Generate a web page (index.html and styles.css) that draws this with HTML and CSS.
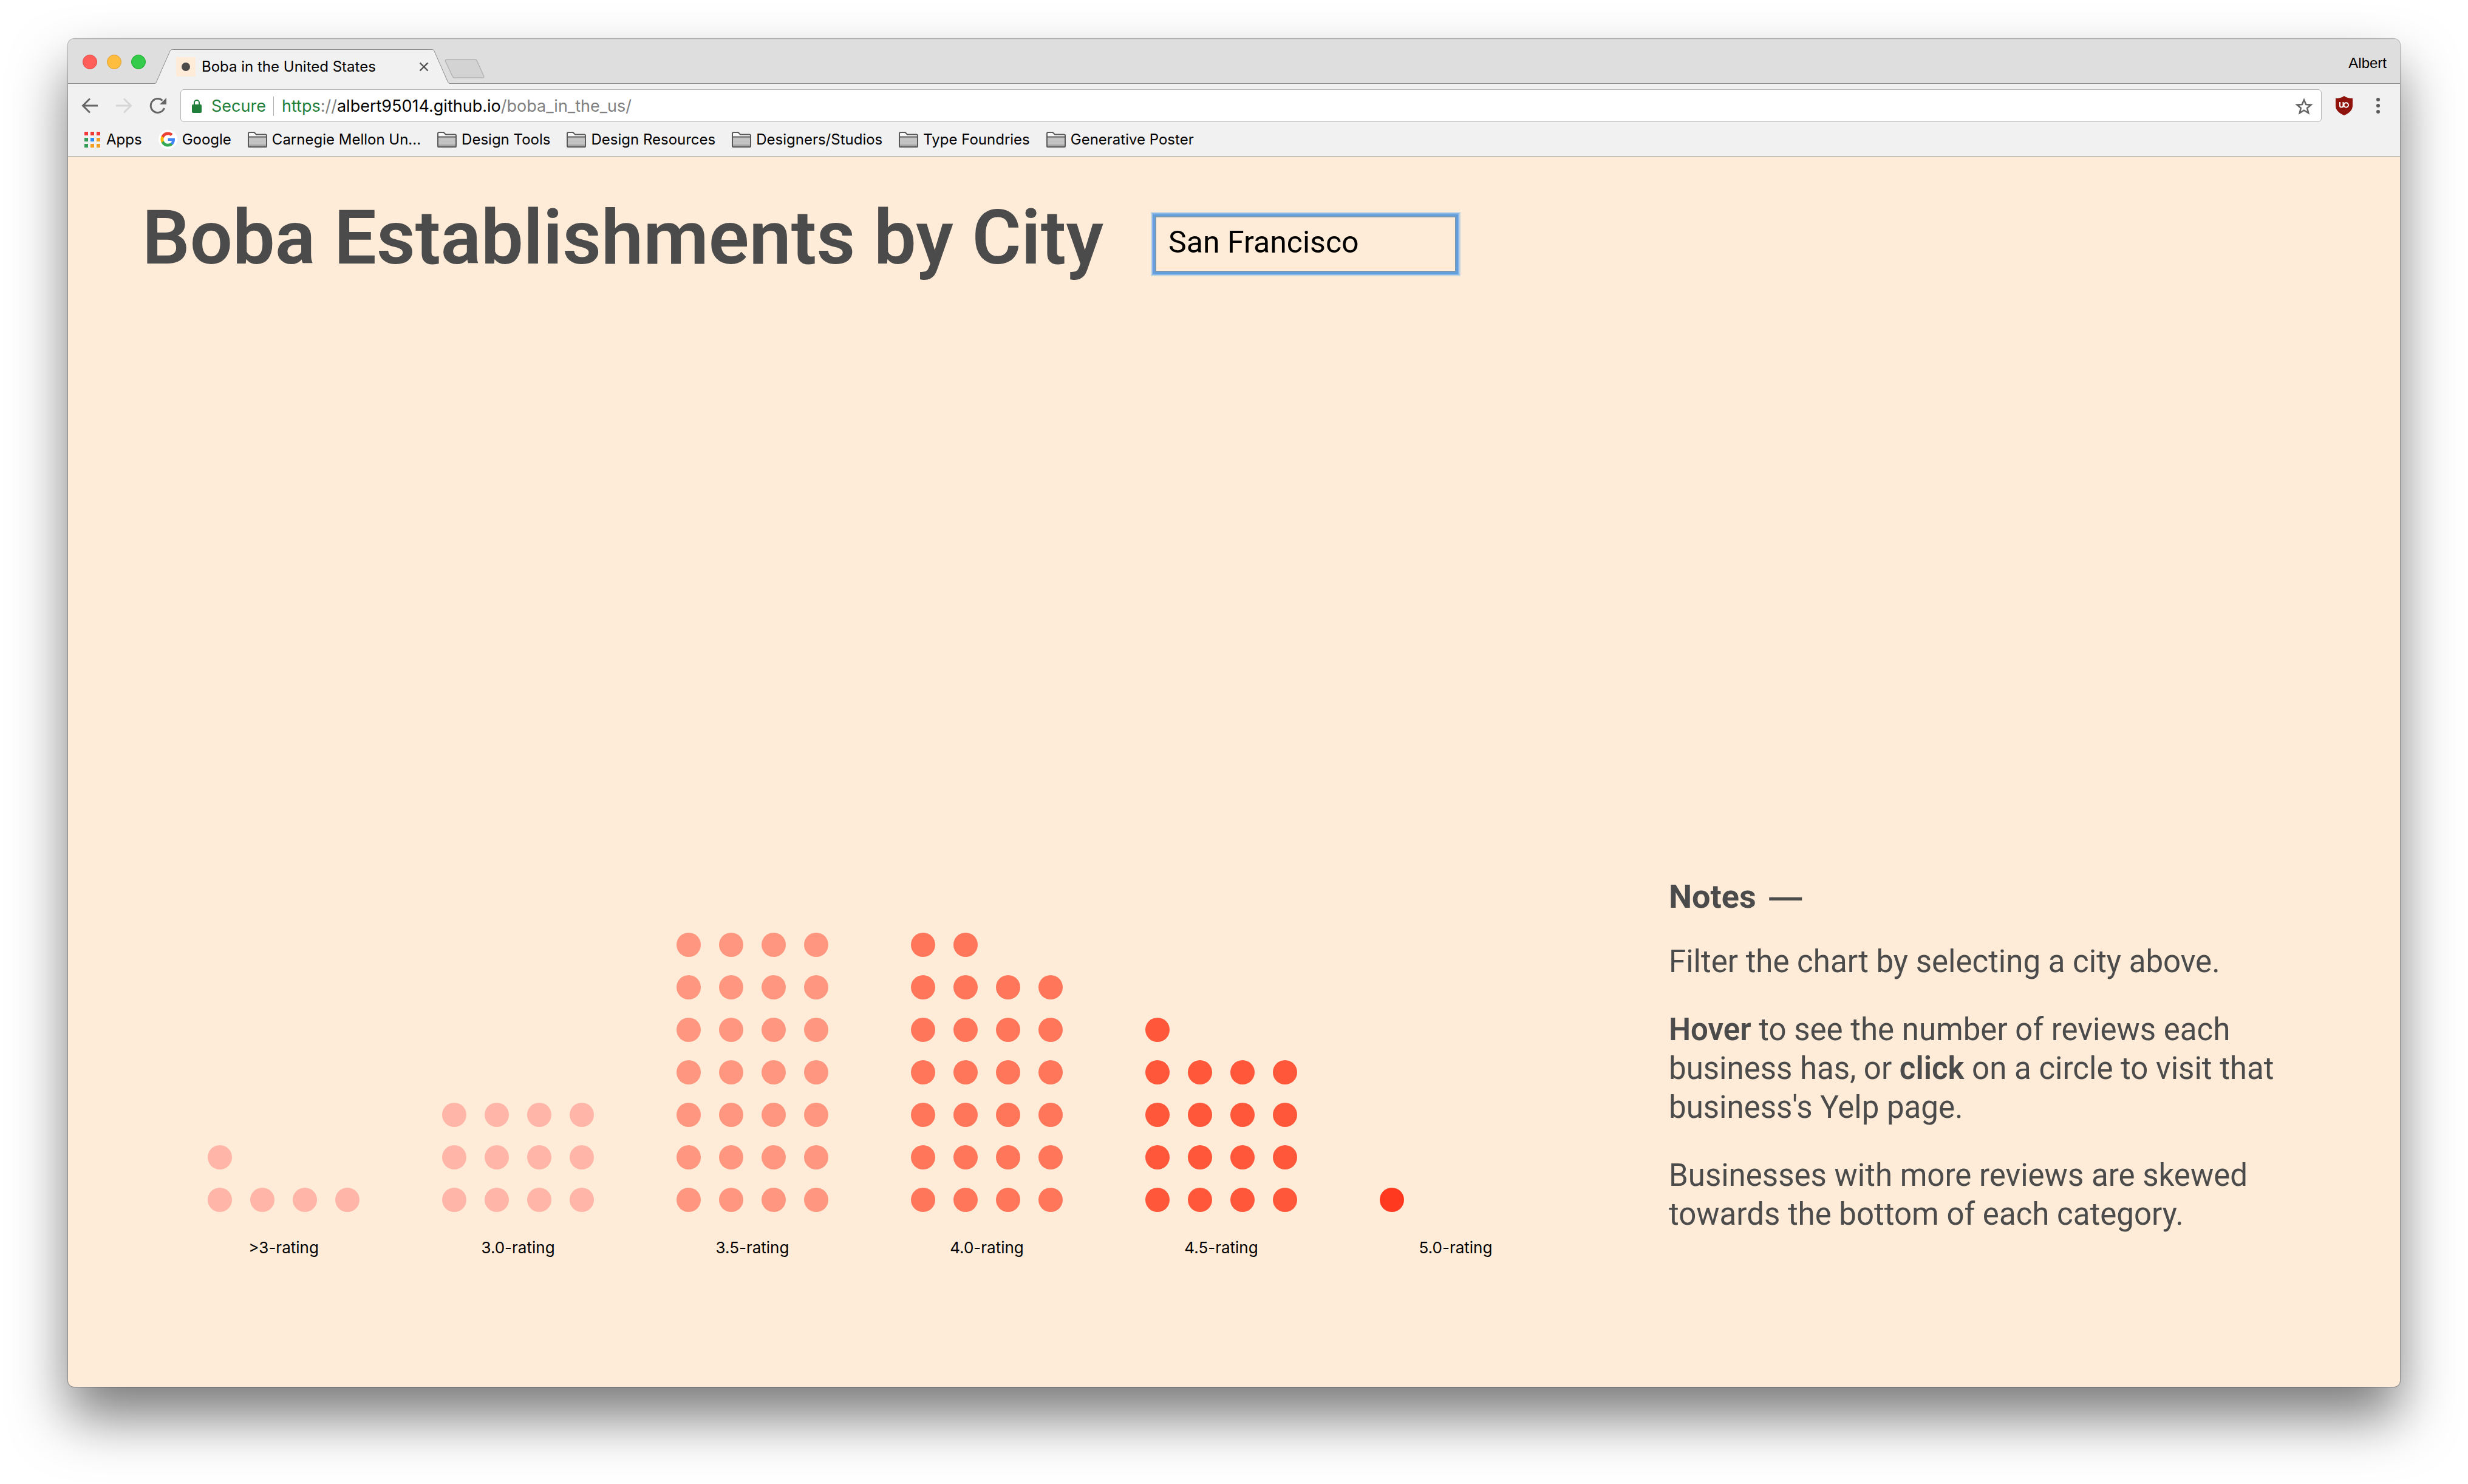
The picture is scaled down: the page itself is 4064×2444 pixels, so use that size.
FILE: index.html
```html
<!DOCTYPE html>
<html lang="en">
<head>
<meta charset="utf-8">
<title>Boba in the United States</title>
<link rel="stylesheet" href="styles.css">
</head>
<body>
<svg class="defs" aria-hidden="true">
  <symbol id="folder" viewBox="0 0 32 26">
    <path d="M1.5 24V3Q1.5 1.500 3 1.500H10.500L14 5H29Q30.500 5 30.500 6.500V24Q30.500 24.500 30 24.500H2Q1.500 24.500 1.500 24Z" fill="#f8f8f8"/>
    <path d="M2 9H30V24H2Z" fill="#c2c2c2"/>
    <path d="M2 21H30V24H2Z" fill="#a6a6a6"/>
    <path d="M1 24V3Q1 1 3 1H10.500L14 4.500H29Q31 4.500 31 6.500V24Q31 25 30 25H2Q1 25 1 24ZM1 8.500H31" fill="none" stroke="#5a5a5a" stroke-width="2"/>
  </symbol>
</svg>
<div class="window">
  <header class="tab-strip">
    <div class="lights">
      <button class="light light-close" aria-label="Close window"></button>
      <button class="light light-min" aria-label="Minimize window"></button>
      <button class="light light-max" aria-label="Full screen"></button>
    </div>
    <div class="tab">
      <svg class="tab-shape" viewBox="0 0 486 57" aria-hidden="true"><path d="M0 57L2 55.500L25 3Q26 .500 29 .500H456Q459 .500 460 3L483 55.500L486 57Z" fill="#f1f1f1"/><path d="M0 56.500Q1.500 56.500 2.500 54L25 3Q26 .500 29 .500H456Q459 .500 460 3L482.500 54Q483.500 56.500 486 56.500" fill="none" stroke="#8e8e8e"/></svg>
      <span class="favicon"></span>
      <span class="tab-title">Boba in the United States</span>
      <button class="icon-button" aria-label="Close tab"><svg width="16" height="16" viewBox="0 0 16 16"><path d="M1.500 1.500L14.500 14.500M14.500 1.500L1.500 14.500" stroke="#505050" stroke-width="2.400"/></svg></button>
    </div>
    <button class="icon-button new-tab" aria-label="New tab"><svg width="66" height="32" viewBox="0 0 66 32"><path d="M4 1H50Q52.500 1 53.500 3.500L64.500 28Q65.500 31 63 31H17Q14 31 13 28.500L1.500 4Q.5 1 4 1Z" fill="#d3d3d3" stroke="#b4b4b4" stroke-width="1.500"/></svg></button>
    <button class="profile">Albert</button>
  </header>

  <div class="toolbar">
    <nav class="history">
      <button class="icon-button" aria-label="Back"><svg width="28" height="28" viewBox="0 0 28 28"><path d="M27 14H3M14 2.500L2.500 14L14 25.500" fill="none" stroke="#666" stroke-width="3"/></svg></button>
      <button class="icon-button" aria-label="Forward" disabled><svg width="28" height="28" viewBox="0 0 28 28"><path d="M1 14H25M14 2.500L25.500 14L14 25.500" fill="none" stroke="#d6d6d6" stroke-width="3"/></svg></button>
      <button class="icon-button" aria-label="Reload"><svg width="28" height="28" viewBox="0 0 28 28"><path d="M24.500 18A11.500 11.500 0 1 1 21.500 5.500" fill="none" stroke="#666" stroke-width="3"/><path d="M28 1V12H17Z" fill="#666"/></svg></button>
    </nav>
    <div class="address">
      <svg width="16" height="22" viewBox="0 0 16 22" aria-hidden="true"><rect y="8" width="16" height="14" rx="2" fill="#1f7f3b"/><path d="M4 9V5A4 4 0 0 1 12 5V9" fill="none" stroke="#1f7f3b" stroke-width="2"/></svg>
      <span class="secure">Secure</span>
      <div class="url" role="textbox" aria-label="Address" contenteditable="true" spellcheck="false"><span class="scheme">https</span><span class="dim">://</span>albert95014.github.io<span class="dim">/boba_in_the_us/</span></div>
      <button class="icon-button" aria-label="Bookmark this page"><svg width="30" height="28" viewBox="0 0 30 28"><path d="M15 3.500L18.200 11L26.500 11.600L20.200 17L22.200 25L15 20.700L7.800 25L9.800 17L3.500 11.600L11.800 11Z" fill="none" stroke="#666" stroke-width="2.600"/></svg></button>
    </div>
    <div class="extensions">
      <button class="icon-button" aria-label="uBlock Origin"><svg width="28" height="32" viewBox="0 0 28 32"><path d="M14 0Q19 4 28 4V16Q28 26 14 32Q0 26 0 16V4Q9 4 14 0Z" fill="#8f130c"/><path d="M7 10V16Q7 18.500 9.500 18.500Q12.500 18.500 12.500 16V10M12.500 18.500V10" fill="none" stroke="#fff" stroke-width="2"/><circle cx="17.300" cy="15" r="3.700" fill="none" stroke="#fff" stroke-width="2"/></svg></button>
      <button class="icon-button" aria-label="Menu"><svg width="28" height="28" viewBox="0 0 28 28" fill="#5a5a5a"><circle cx="14" cy="4" r="3"/><circle cx="14" cy="14" r="3"/><circle cx="14" cy="24" r="3"/></svg></button>
    </div>
  </div>

  <nav class="bookmarks" aria-label="Bookmarks">
    <a class="bookmark apps" href="#apps"><svg width="26" height="26" viewBox="0 0 26 26"><path d="M0 0h6v6H0zM10 0h6v6h-6zM20 0h6v6h-6z" fill="#f23a3a"/><path d="M0 10h6v6H0zM0 20h6v6H0z" fill="#359c58"/><path d="M10 10h6v6h-6z" fill="#2e8cf5"/><path d="M20 10h6v6h-6zM10 20h6v6h-6zM20 20h6v6h-6z" fill="#f0a023"/></svg>Apps</a>
    <a class="bookmark" href="#google"><svg width="31" height="31" viewBox="-3.500 -3.500 31 31"><circle cx="12" cy="12" r="15.500" fill="#fff"/><path d="M23.500 12.300c0-.9-.1-1.600-.2-2.400H12v4.600h6.500c-.3 1.500-1.100 2.800-2.400 3.600v3h3.900c2.200-2.100 3.500-5.100 3.500-8.800z" fill="#4285f4"/><path d="M12 24c3.200 0 6-1.100 8-2.900l-3.900-3c-1.100.7-2.500 1.200-4.100 1.200-3.100 0-5.800-2.100-6.700-4.900h-4v3.100C3.300 21.400 7.300 24 12 24z" fill="#34a853"/><path d="M5.300 14.400c-.3-.8-.4-1.600-.4-2.400s.1-1.600.4-2.400V6.500h-4C.5 8.200 0 10 0 12s.5 3.800 1.300 5.500z" fill="#fbbc05"/><path d="M12 4.700c1.800 0 3.400.6 4.600 1.800L20 3.100C17.900 1.200 15.200 0 12 0 7.300 0 3.300 2.700 1.300 6.500l4 3.100C6.200 6.800 8.900 4.700 12 4.700z" fill="#ea4335"/></svg>Google</a>
    <a class="bookmark" href="#cmu"><svg width="32" height="26"><use href="#folder"/></svg>Carnegie Mellon Un...</a>
    <a class="bookmark" href="#tools"><svg width="32" height="26"><use href="#folder"/></svg>Design Tools</a>
    <a class="bookmark" href="#resources"><svg width="32" height="26"><use href="#folder"/></svg>Design Resources</a>
    <a class="bookmark" href="#studios"><svg width="32" height="26"><use href="#folder"/></svg>Designers/Studios</a>
    <a class="bookmark" href="#type"><svg width="32" height="26"><use href="#folder"/></svg>Type Foundries</a>
    <a class="bookmark" href="#poster"><svg width="32" height="26"><use href="#folder"/></svg>Generative Poster</a>
  </nav>

  <main class="page">
    <div class="page-head">
      <h1><label for="city">Boba Establishments by City</label></h1>
      <select id="city" class="city">
        <option selected>San Francisco</option>
      </select>
    </div>
    <div class="page-body">
      <section class="chart" id="chart" aria-label="Establishments by rating"></section>
      <aside class="notes">
        <h2>Notes <span class="dash">—</span></h2>
        <p>Filter the chart by selecting a city above.</p>
        <p><strong>Hover</strong> to see the number of reviews each business has, or <strong>click</strong> on a circle to visit that business's Yelp page.</p>
        <p>Businesses with more reviews are skewed towards the bottom of each category.</p>
      </aside>
    </div>
  </main>
</div>
<script src="chart.js"></script>
</body>
</html>
```
FILE: styles.css
```css
* { box-sizing: border-box; }

body {
  margin: 0;
  min-height: 100vh;
  padding: 64px 112px 160px;
  display: flex;
  background: #fff;
  color: #000;
  font-family: Inter, "Liberation Sans", sans-serif;
  font-size: 24px;
  line-height: 32px;
}

button, select { font: inherit; color: inherit; }
a { color: inherit; text-decoration: none; }
svg { display: block; flex: none; }
.defs { position: absolute; width: 0; height: 0; }

.window {
  flex: 1;
  min-width: 0;
  display: flex;
  flex-direction: column;
  overflow: hidden;
  border-radius: 10px;
  background: #feecd8;
  box-shadow: 0 0 0 1px rgba(0, 0, 0, .28), 0 50px 90px rgba(0, 0, 0, .52);
}

.icon-button {
  flex: none;
  padding: 0;
  border: 0;
  background: none;
}

/* Tab strip */
.tab-strip {
  display: flex;
  align-items: flex-end;
  height: 74px;
  padding: 0 22px 0 24px;
  border-top: 1px solid #d0d0d0;
  border-bottom: 1px solid #8e8e8e;
  background: #dedede;
}
.lights {
  display: flex;
  gap: 16px;
  align-self: center;
  padding-top: 2px;
}
.light {
  width: 24px;
  height: 24px;
  padding: 0;
  border: 1px solid #e2463f;
  border-radius: 50%;
  background: #ff5f58;
}
.light-min { border-color: #e0a030; background: #ffbd3f; }
.light-max { border-color: #1faa30; background: #33cb49; }

.tab {
  position: relative;
  display: flex;
  align-items: center;
  width: 486px;
  height: 57px;
  margin: 0 0 -1px 15px;
  padding: 0 35px;
  isolation: isolate;
}
.tab-shape { position: absolute; inset: 0; z-index: -1; }
.favicon {
  display: grid;
  place-items: center;
  width: 32px;
  height: 32px;
  background: #feecd8;
}
.favicon::before {
  content: "";
  width: 14px;
  height: 14px;
  border-radius: 50%;
  background: #4b4b4b;
}
.tab-title { flex: 1; padding-left: 10px; }
.new-tab { margin: 0 0 8px -9px; }
.profile {
  align-self: center;
  margin-left: auto;
  padding: 6px 0 0;
  border: 0;
  background: none;
  font-family: "Liberation Sans", Arial, sans-serif;
}

/* Toolbar */
.toolbar {
  display: flex;
  align-items: center;
  gap: 23px;
  height: 64px;
  padding: 8px 22px 0;
  background: #f1f1f1;
}
.toolbar, .bookmarks { flex: none; }
.history, .extensions { display: flex; align-items: center; gap: 28px; }
.address {
  flex: 1;
  display: flex;
  align-items: center;
  height: 54px;
  padding: 1px 13px 0 18px;
  border: 1px solid #b4b4b4;
  border-radius: 6px;
  background: #fff;
  font-size: 27px;
}
.secure {
  margin-left: 16px;
  padding-right: 12px;
  border-right: 1px solid #b0b0b0;
  color: #1f7f3b;
}
.url { flex: 1; padding-left: 13px; outline: 0; }
.scheme { color: #1f7f3b; }
.dim { color: #808080; }

/* Bookmarks bar */
.bookmarks {
  display: flex;
  align-items: center;
  gap: 27px;
  height: 56px;
  padding: 0 27px;
  border-bottom: 1px solid #b4b4b4;
  background: #f1f1f1;
  white-space: nowrap;
}
.bookmark { display: flex; align-items: center; gap: 8px; }
.apps { gap: 10px; }

/* Page */
.page {
  flex: 1;
  display: flex;
  flex-direction: column;
  justify-content: space-between;
  gap: 80px;
  padding: 72px 184px 213px 122px;
  color: #4b4b4b;
  font-family: Roboto, "Liberation Sans", sans-serif;
}
.page-head { display: flex; align-items: flex-end; gap: 85px; }
h1 {
  margin: 0;
  font-size: 124px;
  font-weight: 600;
  line-height: 124px;
}
.city {
  appearance: none;
  width: 496px;
  height: 92px;
  margin-bottom: 6px;
  padding: 0 20px 6px;
  border: 2px solid #7799b8;
  border-radius: 0;
  outline: 0;
  background: transparent;
  box-shadow: 0 0 0 3px #649edb, 0 0 0 5px #86b6ea, 0 0 0 7px #c8d6de;
  color: #000;
  font-size: 50px;
  line-height: 64px;
}

.page-body { display: flex; align-items: flex-end; justify-content: space-between; gap: 80px; }
.chart {
  display: flex;
  align-items: flex-end;
  gap: 136px;
  padding-left: 108px;
}
.group { width: 250px; margin: 0; }
.dots {
  display: flex;
  flex-wrap: wrap-reverse;
  gap: 30px;
}
.dot {
  width: 40px;
  height: 40px;
  border-radius: 50%;
  background: currentColor;
}
.group figcaption {
  margin-top: 43px;
  color: #000;
  font-family: Inter, "Liberation Sans", sans-serif;
  font-size: 26px;
  line-height: 32px;
  text-align: center;
}
.rating-low { color: #ffb6a8; }
.rating-35 { color: #ff967f; }
.rating-40 { color: #ff765b; }
.rating-45 { color: #ff573a; }
.rating-50 { color: #ff3920; }

.notes {
  flex: 0 1 1020px;
  padding-bottom: 39px;
  font-size: 51px;
  line-height: 64px;
}
.notes h2 { margin: 0 0 43px; font-size: 54px; line-height: 64px; }
.notes p { margin: 0 0 48px; }
.notes p:last-child { margin: 0; }
.notes strong { font-weight: 600; }
.dash { margin-left: 8px; font-family: "Liberation Sans", Arial, sans-serif; }
```
FILE: chart.js
```js
const groups = [
  { label: ">3-rating", count: 5, tone: "rating-low" },
  { label: "3.0-rating", count: 12, tone: "rating-low" },
  { label: "3.5-rating", count: 28, tone: "rating-35" },
  { label: "4.0-rating", count: 26, tone: "rating-40" },
  { label: "4.5-rating", count: 17, tone: "rating-45" },
  { label: "5.0-rating", count: 1, tone: "rating-50" }
];

const chart = document.getElementById("chart");

for (const { label, count, tone } of groups) {
  const group = document.createElement("figure");
  group.className = "group";

  const dots = document.createElement("div");
  dots.className = `dots ${tone}`;
  for (let i = 1; i <= count; i++) {
    const dot = document.createElement("a");
    dot.className = "dot";
    dot.href = "#business";
    dot.setAttribute("aria-label", `${label}, business ${i}`);
    dots.append(dot);
  }

  const caption = document.createElement("figcaption");
  caption.textContent = label;
  group.append(dots, caption);
  chart.append(group);
}
```
